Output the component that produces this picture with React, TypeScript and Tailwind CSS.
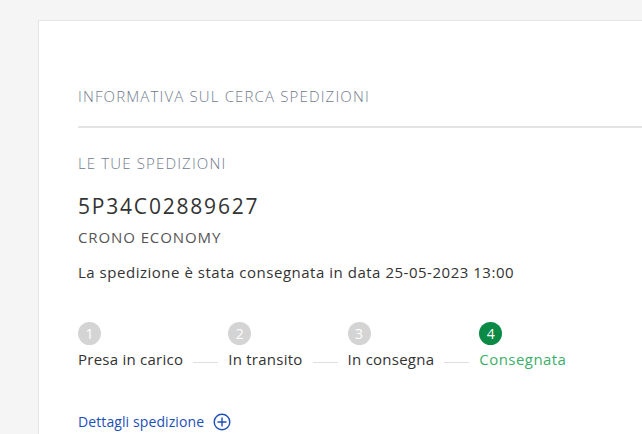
import React from 'react';

const steps = [
  { n: 1, label: 'Presa in carico', done: false },
  { n: 2, label: 'In transito', done: false },
  { n: 3, label: 'In consegna', done: false },
  { n: 4, label: 'Consegnata', done: true },
];

const App: React.FC = () => {
  return (
    <div className="min-h-screen bg-[#f5f5f5] pt-5 pl-[38px] font-['Open_Sans',sans-serif] overflow-hidden">
      <div className="bg-white border border-[#e6e6e6] border-r-0 h-[420px] pl-[39px] pt-[61px]">
        {/* Header */}
        <h2 className="text-[15px] font-light text-[#6f7b8c] uppercase leading-[28px] tracking-[1.15px]">
          Informativa sul cerca spedizioni
        </h2>
        <div className="mt-[16px] h-[2px] bg-[#e4e4e4]" />

        {/* Shipment */}
        <div className="mt-[25px]">
          <p className="text-[15px] font-light text-[#6f7b8c] uppercase leading-5 tracking-[1.15px]">Le tue spedizioni</p>
          <p className="mt-[21px] text-[21px] text-[#333] leading-6 tracking-[1.8px]">5P34C02889627</p>
          <p className="mt-[9px] text-[15px] text-[#555] uppercase leading-5 tracking-[0.9px]">Crono economy</p>
          <p className="mt-[15px] text-[15px] text-[#333] leading-5 tracking-[0.52px]">
            La spedizione è stata consegnata in data 25-05-2023 13:00
          </p>
        </div>

        {/* Steps */}
        <div className="mt-[40px] flex items-end">
          {steps.map((s, i) => (
            <React.Fragment key={s.n}>
              <div className="flex flex-col items-start">
                <span
                  className={
                    s.done
                      ? 'w-[23px] h-[23px] rounded-full bg-[#0a8a44] text-white text-[14px] flex items-center justify-center leading-none'
                      : 'w-[23px] h-[23px] rounded-full bg-[#d4d4d4] text-white text-[14px] flex items-center justify-center leading-none'
                  }
                >
                  {s.n}
                </span>
                <span
                  className={
                    s.done
                      ? 'mt-[4px] text-[15px] leading-5 tracking-[0.45px] text-[#3dae6a]'
                      : 'mt-[4px] text-[15px] leading-5 tracking-[0.25px] text-[#333]'
                  }
                >
                  {s.label}
                </span>
              </div>
              {i < steps.length - 1 && <div className="mx-[10px] mb-[6px] w-[25px] h-px bg-[#dedede]" />}
            </React.Fragment>
          ))}
        </div>

        {/* Details link */}
        <div className="mt-[43px] flex items-center gap-[9px] text-[#1c4fb8]">
          <span className="text-[14px] leading-5 tracking-[0.1px]">Dettagli spedizione</span>
          <svg width="18" height="18" viewBox="0 0 18 18" fill="none" stroke="currentColor" strokeWidth="1.4">
            <circle cx="9" cy="9" r="7.8" />
            <path d="M9 4.5v9M4.5 9h9" />
          </svg>
        </div>
      </div>
    </div>
  );
};

export default App;
